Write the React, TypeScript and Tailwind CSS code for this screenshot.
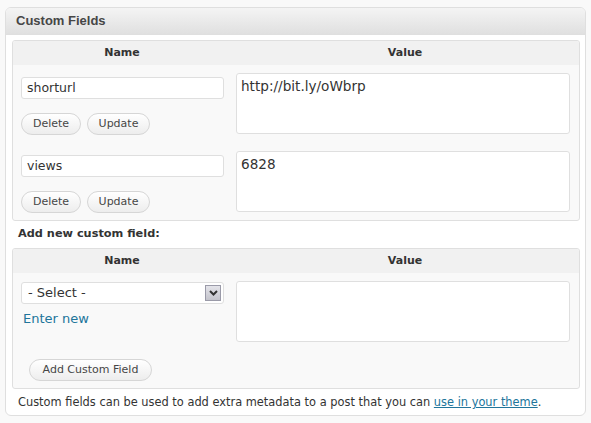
import React from "react";

const font = { fontFamily: '"DejaVu Sans", Verdana, sans-serif' };
const arial = { fontFamily: '"Liberation Sans", Arial, sans-serif' };

function Btn({ children, w }: { children: React.ReactNode; w: string }) {
  return (
    <div
      className={`${w} h-[22px] flex items-center justify-center rounded-full border border-[#d6d6d6] bg-gradient-to-b from-white to-[#ededed] text-[11px] text-[#464646]`}
    >
      {children}
    </div>
  );
}

function HeaderRow() {
  return (
    <div className="flex h-[24px] bg-[#f1f1f1] text-[11px] font-bold text-[#333]">
      <div className="w-[218px] flex items-center justify-center">Name</div>
      <div className="flex-1 flex items-center justify-center">Value</div>
    </div>
  );
}

function FieldRow({ name, value, top }: { name: string; value: string; top: string }) {
  return (
    <div className={`flex ${top}`}>
      <div className="w-[223px] pl-[8px] pt-[4px] flex flex-col">
        <div className="w-[203px] h-[22px] border border-[#dfdfdf] rounded-[3px] bg-white flex items-center pl-[5px] text-[12.5px] text-[#333]">
          {name}
        </div>
        <div className="flex gap-[6px] mt-[14px]">
          <Btn w="w-[60px]">Delete</Btn>
          <Btn w="w-[63px]">Update</Btn>
        </div>
      </div>
      <div className="w-[334px] h-[61px] border border-[#dfdfdf] rounded-[3px] bg-white pl-[4px] pt-[3px] text-[13.6px] text-[#333] leading-[18px]">
        {value}
      </div>
    </div>
  );
}

export default function App() {
  return (
    <div style={font} className="w-[591px] h-[423px] bg-[#f9f9f9] pt-[7px] pl-[5px]">
      <div className="w-[581px] h-[409px] border border-[#dfdfdf] rounded-[6px] bg-white overflow-hidden">
        <div
          style={arial}
          className="h-[27px] bg-gradient-to-b from-[#f4f4f4] to-[#e0e0e0] border-b border-[#dfdfdf] flex items-center pl-[10px] text-[13px] font-bold text-[#464646]"
        >
          Custom Fields
        </div>
        <div className="px-[6px] pt-[5px]">
          <div className="w-[568px] h-[181px] border border-[#dfdfdf] rounded-[3px] bg-[#f9f9f9] overflow-hidden">
            <HeaderRow />
            <FieldRow name="shorturl" value="http://bit.ly/oWbrp" top="pt-[8px]" />
            <FieldRow name="views" value="6828" top="pt-[16px]" />
          </div>
          <div className="h-[27px] flex items-center pl-[6px] text-[11.3px] font-bold text-[#333]">
            Add new custom field:
          </div>
          <div className="w-[568px] h-[141px] border border-[#dfdfdf] rounded-[3px] bg-[#f9f9f9] overflow-hidden">
            <HeaderRow />
            <div className="flex pt-[8px]">
              <div className="w-[223px] pl-[8px] pt-[1px] flex flex-col">
                <div className="w-[203px] h-[22px] border border-[#dfdfdf] rounded-[3px] bg-white flex items-center justify-between pl-[6px] pr-[2px] text-[13px] text-[#333]">
                  <span>- Select -</span>
                  <div className="w-[16px] h-[16px] border border-[#9a9aa8] bg-gradient-to-b from-[#e4e4ea] to-[#c4c4cc] flex items-center justify-center">
                    <svg width="9" height="6" viewBox="0 0 9 6">
                      <path d="M1 1 L4.5 4.5 L8 1" stroke="#333" strokeWidth="2" fill="none" />
                    </svg>
                  </div>
                </div>
                <div className="mt-[6px] pl-[2px] text-[13px] text-[#21759b] leading-[18px]">Enter new</div>
                <div className="mt-[31px] pl-[8px]">
                  <Btn w="w-[123px]">Add Custom Field</Btn>
                </div>
              </div>
              <div className="w-[334px] h-[61px] border border-[#dfdfdf] rounded-[3px] bg-white" />
            </div>
          </div>
          <div className="h-[28px] flex items-center pl-[6px] text-[11.4px] text-[#333]">
            <span>
              Custom fields can be used to add extra metadata to a post that you can{" "}
              <span className="text-[#21759b] underline">use in your theme</span>.
            </span>
          </div>
        </div>
      </div>
    </div>
  );
}
